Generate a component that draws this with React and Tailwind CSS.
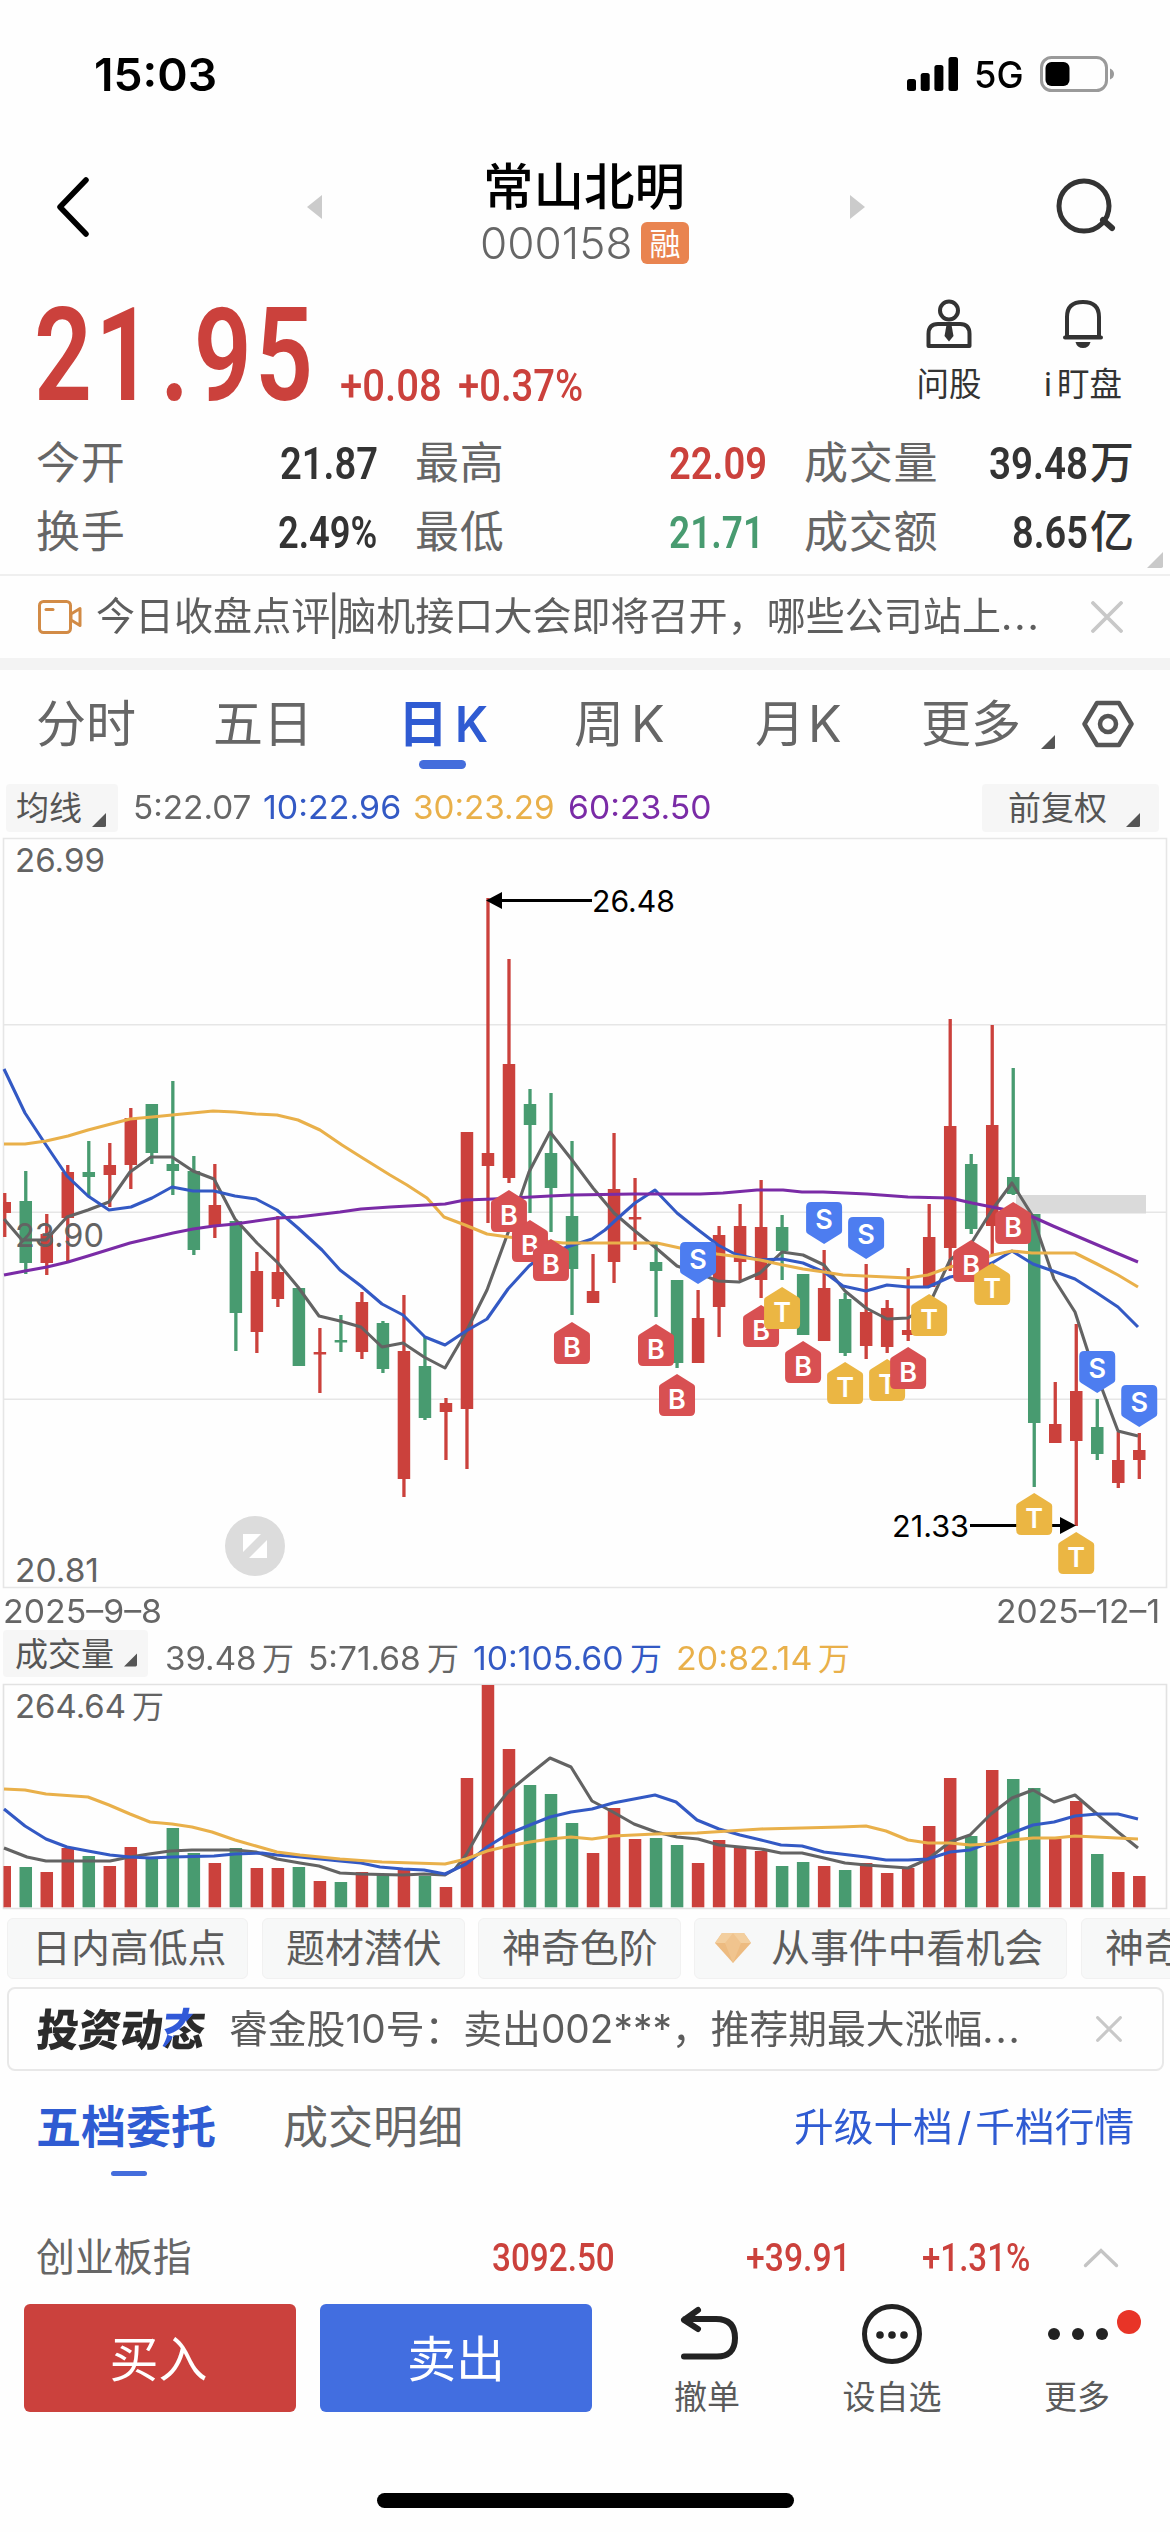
import React, { useLayoutEffect, useRef, useState } from "react";

const RED = "#cb413c";
const GREEN = "#489b70";
const GRAY = "#636363";
const BLUE = "#3359c4";
const GOLD = "#e9b04a";
const PURPLE = "#7a2ba6";

const STEP = 21.01;
const cx = (i) => 4.7 + STEP * i;

// [up, wick top, wick bottom, body top, body bottom, volume top]
const DAYS = [
  [1, 1193, 1237, 1202, 1213, 1866], [0, 1171, 1274, 1201, 1263, 1867], [1, 1214, 1275, 1234, 1263, 1872],
  [1, 1165, 1261, 1172, 1218, 1848], [0, 1141, 1196, 1172, 1177, 1856], [1, 1143, 1207, 1165, 1175, 1866],
  [1, 1108, 1189, 1118, 1165, 1847], [0, 1104, 1164, 1104, 1153, 1857], [0, 1081, 1195, 1164, 1171, 1828],
  [0, 1156, 1255, 1171, 1250, 1853], [1, 1164, 1238, 1205, 1226, 1863], [0, 1221, 1351, 1221, 1313, 1848],
  [1, 1252, 1353, 1271, 1332, 1868], [1, 1216, 1307, 1272, 1299, 1868], [0, 1288, 1366, 1288, 1366, 1867],
  [1, 1328, 1393, 1352, 1354.5, 1881], [0, 1315, 1352, 1340, 1342.5, 1882], [1, 1292, 1359, 1302, 1352, 1872],
  [0, 1321, 1373, 1323, 1369, 1875], [1, 1295, 1497, 1351, 1479, 1870], [0, 1337, 1420, 1366, 1418, 1876],
  [1, 1398, 1460, 1403, 1412, 1887], [1, 1132, 1469, 1132, 1409, 1778], [1, 898, 1223, 1153, 1166, 1685],
  [1, 959, 1183, 1064, 1178, 1749], [0, 1089, 1213, 1104, 1125, 1785], [0, 1093, 1232, 1153, 1188, 1794],
  [0, 1141, 1315, 1216, 1269, 1823], [1, 1254, 1303, 1291, 1303, 1853], [1, 1133, 1283, 1189, 1262, 1808],
  [1, 1178, 1250, 1217, 1219.5, 1839], [0, 1243, 1317, 1262, 1271, 1838], [0, 1280, 1368, 1280, 1363, 1845],
  [1, 1290, 1363, 1318, 1363, 1863], [1, 1226, 1337, 1235, 1307, 1840], [1, 1204, 1280, 1226, 1262, 1847],
  [1, 1180, 1298, 1227, 1280, 1851], [0, 1215, 1280, 1227, 1251, 1866], [0, 1274, 1335, 1274, 1335, 1862],
  [1, 1250, 1341, 1288, 1341, 1866], [0, 1293, 1356, 1299, 1353, 1870], [1, 1264, 1359, 1312, 1346, 1863],
  [1, 1300, 1353, 1308, 1347, 1873], [1, 1268, 1341, 1330, 1335, 1868], [1, 1204, 1287, 1237, 1287, 1826],
  [1, 1019, 1271, 1126, 1248, 1778], [0, 1154, 1234, 1164, 1229, 1836], [1, 1025, 1256, 1125, 1226, 1770],
  [0, 1068, 1195, 1177, 1194, 1779], [0, 1214, 1487, 1214, 1423, 1788], [1, 1382, 1443, 1424, 1443, 1839],
  [1, 1324, 1526, 1391, 1441, 1801], [0, 1399, 1460, 1427, 1454, 1854], [1, 1432, 1488, 1460, 1483, 1872],
  [1, 1433, 1479, 1450, 1460, 1876],
];

const PRICE_LINES = [
  [GRAY, "4,1219 22,1240 46,1240 67,1217 88,1210 109,1202 130,1172 151,1157 172,1157 193,1171 214,1179 235,1219 257,1243 278,1263 298,1287 319,1316 340,1321 361,1327 382,1347 403,1343 424,1357 445,1368 466,1332 487,1290 509,1230 529,1172 550,1132 572,1160 593,1188 614,1213 635,1231 656,1248 677,1266 708,1277 718,1281 739,1282 760,1273 782,1252 803,1255 824,1265 845,1291 866,1308 887,1319 908,1318 929,1305 950,1260 972,1242 992,1210 1012,1183 1032,1215 1054,1279 1075,1312 1088,1352 1096,1373 1118,1431 1138,1436"],
  [BLUE, "4,1069 25,1113 44,1142 67,1176 88,1196 109,1210 131,1207 152,1198 172,1187 193,1191 214,1191 235,1196 256,1199 277,1210 298,1228 322,1250 340,1270 361,1286 382,1304 403,1315 425,1337 445,1345 466,1331 487,1319 508,1289 529,1266 542,1256 570,1246 592,1239 605,1230 618,1218 635,1203 655,1190 677,1213 697,1229 718,1245 735,1254 760,1260 782,1259 803,1263 824,1272 843,1286 866,1291 887,1285 908,1287 928,1287 950,1277 972,1273 992,1263 1012,1251 1033,1264 1053,1271 1075,1279 1097,1293 1118,1307 1138,1327"],
  [GOLD, "4,1144 25,1144 46,1141 68,1136 88,1130 130,1119 152,1117 172,1115 213,1111 235,1112 256,1114 277,1115 298,1120 320,1130 342,1145 361,1157 390,1175 407,1185 427,1198 444,1217 465,1225 487,1234 508,1237 563,1243 657,1243 680,1248 717,1254 740,1257 760,1260 783,1265 803,1269 824,1272 843,1275 887,1277 908,1278 928,1275 950,1267 972,1262 993,1255 1012,1251 1032,1253 1075,1253 1097,1264 1118,1275 1138,1287"],
  [PURPLE, "4,1275 25,1271 47,1267 68,1262 88,1256 130,1243 173,1233 193,1229 214,1226 235,1224 277,1218 298,1217 340,1212 361,1209 390,1207 445,1204 465,1200 493,1199 550,1196 572,1195 633,1194 700,1194 723,1193 757,1190 783,1190 802,1192 823,1192 867,1194 908,1197 950,1198 972,1203 1002,1209 1033,1217 1053,1226 1107,1249 1138,1262"],
];

const VOLUME_LINES = [
  [GRAY, "4,1848 27,1857 46,1861 110,1861 130,1857 149,1854 170,1851 192,1850 236,1850 256,1852 277,1859 300,1863 319,1866 340,1873 361,1874 403,1875 424,1874 445,1875 455,1869 466,1855 487,1818 508,1792 530,1774 550,1758 571,1767 592,1801 613,1812 634,1824 656,1832 677,1837 698,1839 719,1845 740,1847 761,1849 781,1853 802,1853 824,1858 845,1863 866,1865 908,1868 928,1859 950,1842 970,1835 991,1814 1012,1798 1033,1790 1054,1802 1075,1795 1097,1814 1118,1832 1138,1848"],
  [BLUE, "4,1809 25,1826 46,1839 67,1847 88,1851 110,1855 130,1857 150,1858 172,1857 214,1856 235,1854 262,1853 277,1855 300,1857 340,1861 361,1863 380,1867 403,1869 424,1870 445,1874 466,1864 487,1847 508,1834 530,1825 550,1817 571,1812 592,1809 613,1803 634,1799 655,1795 676,1802 697,1820 719,1829 740,1835 761,1840 781,1845 802,1846 824,1852 866,1857 886,1860 908,1860 928,1859 950,1852 970,1850 991,1842 1012,1833 1033,1825 1054,1822 1075,1816 1097,1814 1118,1814 1138,1819"],
  [GOLD, "4,1789 25,1790 46,1794 88,1797 109,1805 130,1814 150,1822 172,1824 192,1827 212,1832 235,1840 256,1846 277,1852 300,1855 340,1859 382,1862 445,1864 466,1859 487,1851 508,1846 530,1842 550,1839 571,1837 592,1839 613,1836 655,1834 697,1833 761,1829 841,1827 866,1826 886,1831 908,1840 928,1843 950,1843 970,1845 991,1844 1012,1840 1033,1838 1055,1838 1075,1836 1138,1839"],
];

// [day index, kind, top y]
const MARKERS = [
  [24, "B", 1190], [25, "B", 1220], [26, "B", 1239], [27, "B", 1322], [31, "B", 1324], [32, "B", 1374],
  [33, "S", 1242], [36, "B", 1305], [37, "T", 1287], [38, "B", 1341], [39, "S", 1202], [40, "T", 1362],
  [41, "S", 1217], [42, "T", 1359], [43, "B", 1347], [44, "T", 1294], [46, "B", 1240], [47, "T", 1263],
  [48, "B", 1202], [49, "T", 1493], [51, "T", 1532], [52, "S", 1351], [54, "S", 1385],
];
const MARKER_FILL = { B: "#d85052", T: "#ebb643", S: "#4d7df0" };

// Stretches its text horizontally to the width given by its class.
function Fit({ className = "", children }) {
  const outer = useRef(null);
  const inner = useRef(null);
  const [scale, setScale] = useState(1);
  useLayoutEffect(() => {
    setScale(outer.current.clientWidth / inner.current.offsetWidth);
  }, []);
  return (
    <span ref={outer} className={"block shrink-0 whitespace-nowrap " + className}>
      <span ref={inner} className="inline-block origin-left align-top" style={{ transform: `scaleX(${scale})` }}>
        {children}
      </span>
    </span>
  );
}

function Corner({ className = "", color = "#555" }) {
  return (
    <svg viewBox="0 0 14 14" className={"shrink-0 " + className}>
      <path d="M14 0V12.5Q14 14 12.5 14H0Z" fill={color} />
    </svg>
  );
}

function Close({ className }) {
  return (
    <svg viewBox="0 0 32 32" className={"shrink-0 " + className}>
      <path d="M2 2L30 30M30 2L2 30" stroke="#c8c8c8" strokeWidth="3.8" strokeLinecap="round" />
    </svg>
  );
}

function ChartText({ x, y, w, size, fill = GRAY, children }) {
  return (
    <text x={x} y={y} fontSize={size} fill={fill} textLength={w} lengthAdjust="spacingAndGlyphs">
      {children}
    </text>
  );
}

function Marker({ index, kind, top }) {
  const x = cx(index) - 18;
  const down = kind === "S";
  const d = down
    ? "M5 0H31Q36 0 36 5V29Q36 31 34 32L18 42L2 32Q0 31 0 29V5Q0 0 5 0Z"
    : "M18 0L34 10Q36 11 36 13V37Q36 42 31 42H5Q0 42 0 37V13Q0 11 2 10Z";
  const y = down ? 27 : 35;
  return (
    <g transform={`translate(${x} ${top})`}>
      <path d={d} fill={MARKER_FILL[kind]} />
      <text x="18" y={y} textAnchor="middle" fontSize="27" fontWeight="600" fill="#fff">
        {kind}
      </text>
    </g>
  );
}

function PriceChart() {
  return (
    <svg viewBox="0 836 1170 754" className="block h-[754px] w-[1170px] shrink-0 font-['Inter','Noto_Sans_CJK_SC',sans-serif]">
      <g stroke="#e6e6e6" strokeWidth="1.6" fill="none">
        <path d="M3.5 838.5H1166.5V1587.5H3.5Z" />
        <path d="M4 1024.8H1166M4 1212.3H1166M4 1399.3H1166" />
      </g>
      <rect x="1016" y="1195" width="130" height="18.5" fill="#dadada" />
      {DAYS.map(([up, wt, wb, bt, bb], i) => (
        <g key={i} fill={up ? RED : GREEN}>
          <rect x={cx(i) - 1.6} y={wt} width="3.3" height={wb - wt} />
          <rect x={Math.max(3.3, cx(i) - 6.2)} y={bt} width={i === 0 ? 7.7 : 12.5} height={bb - bt} />
        </g>
      ))}
      <ChartText x="15" y="872" w="90" size="33">26.99</ChartText>
      <ChartText x="15" y="1247" w="89" size="33">23.90</ChartText>
      <ChartText x="15" y="1582" w="84" size="33">20.81</ChartText>
      {PRICE_LINES.map(([color, points]) => (
        <polyline key={color} points={points} fill="none" stroke={color} strokeWidth="3.1" strokeLinejoin="round" />
      ))}
      <path d="M500 900.5H592M970 1525.5H1062" stroke="#000" strokeWidth="3" />
      <path d="M486 900.5L502 892V909ZM1076 1525.5L1060 1517V1534Z" fill="#000" />
      <ChartText x="592" y="912" w="83" size="30" fill="#000">26.48</ChartText>
      <ChartText x="892" y="1537" w="77" size="30" fill="#000">21.33</ChartText>
      {MARKERS.map(([i, kind, top]) => (
        <Marker key={i} index={i} kind={kind} top={top} />
      ))}
      <circle cx="255" cy="1546" r="30" fill="#dcdcdc" />
      <path d="M243 1534H261L243 1552ZM267 1540V1558H249Z" fill="#fff" />
    </svg>
  );
}

function VolumeChart() {
  return (
    <svg viewBox="0 1682 1170 230" className="block h-[230px] w-[1170px] shrink-0 font-['Inter','Noto_Sans_CJK_SC',sans-serif]">
      <path d="M3.5 1684.5H1166.5V1908.5H3.5Z" stroke="#e2e2e2" strokeWidth="1.6" fill="none" />
      <ChartText x="15" y="1718" w="111" size="32.5">264.64</ChartText>
      <ChartText x="132" y="1718" w="32" size="32">万</ChartText>
      {DAYS.map(([up, , , , , top], i) => (
        <rect
          key={i}
          x={Math.max(3.5, cx(i) - 6.2)}
          y={top}
          width={i === 0 ? 7.5 : 12.5}
          height={1907.3 - top}
          fill={up ? RED : GREEN}
        />
      ))}
      {VOLUME_LINES.map(([color, points]) => (
        <polyline key={color} points={points} fill="none" stroke={color} strokeWidth="3.1" strokeLinejoin="round" />
      ))}
    </svg>
  );
}

function StatusBar() {
  return (
    <div className="flex h-[148px] shrink-0 items-center text-black">
      <Fit className="ml-[94px] w-[123px] pt-[1px] text-[45px] leading-[48px] font-semibold">15:03</Fit>
      <svg viewBox="0 0 52 34" className="ml-[690px] h-[34px] w-[52px] shrink-0">
        <rect x="0" y="22" width="9" height="12" rx="2.5" />
        <rect x="13.7" y="16" width="9" height="18" rx="2.5" />
        <rect x="27.4" y="8" width="9" height="26" rx="2.5" />
        <rect x="41.5" y="0" width="9.5" height="34" rx="2.5" />
      </svg>
      <Fit className="ml-[15px] w-[50px] pt-[2px] text-[37px] leading-[44px] font-medium">5G</Fit>
      <svg viewBox="0 0 76 36" className="ml-[16px] h-[36px] w-[76px] shrink-0">
        <rect x="1.5" y="1.5" width="65" height="33" rx="10" fill="none" stroke="#9a9a9a" strokeWidth="3" />
        <rect x="5.5" y="6" width="24" height="24" rx="6" />
        <path d="M70 12.5Q74 14 74 18T70 23.5Z" fill="#9a9a9a" />
      </svg>
    </div>
  );
}

function Header() {
  return (
    <div className="flex h-[118px] shrink-0 items-center">
      <svg viewBox="0 0 34 60" className="ml-[56px] h-[60px] w-[34px] shrink-0">
        <path d="M30 3L4 30L30 57" fill="none" stroke="#000" strokeWidth="5.5" strokeLinecap="round" strokeLinejoin="round" />
      </svg>
      <svg viewBox="0 0 15 24" className="ml-[217px] h-[24px] w-[15px] shrink-0">
        <path d="M15 0V24L0 12Z" fill="#cbcbcb" />
      </svg>
      <div className="ml-[158px] flex h-[118px] w-[212px] shrink-0 flex-col">
        <div className="mt-[14px] ml-[3px] text-[50.5px] leading-[50px] font-medium whitespace-nowrap text-black">常山北明</div>
        <div className="mt-[10px] flex h-[42px] items-center">
          <Fit className="w-[152px] text-[43px] leading-[42px] font-light text-[#666]">000158</Fit>
          <span className="ml-[9px] flex h-[42px] w-[48px] items-center justify-center rounded-md bg-[#e98450] text-[31px] leading-[31px] text-white">
            融
          </span>
        </div>
      </div>
      <svg viewBox="0 0 15 24" className="ml-[158px] h-[24px] w-[15px] shrink-0">
        <path d="M0 0V24L15 12Z" fill="#cbcbcb" />
      </svg>
      <svg viewBox="0 0 64 60" className="ml-[190px] h-[60px] w-[64px] shrink-0">
        <circle cx="29" cy="29" r="25" fill="none" stroke="#333" strokeWidth="5" />
        <path d="M48 43L57 51" stroke="#333" strokeWidth="6" strokeLinecap="round" />
      </svg>
    </div>
  );
}

function PriceRow() {
  return (
    <div className="flex h-[162px] shrink-0 items-start font-['Roboto','Noto_Sans_CJK_SC',sans-serif] text-[#cb413c]">
      <Fit className="mt-[25px] ml-[34px] w-[282px] text-[130px] leading-[130px] font-semibold tracking-[4px]">
        21<span className="mr-[2px] ml-[5px]">.</span>95
      </Fit>
      <Fit className="mt-[98px] ml-[24px] w-[102px] text-[44px] leading-[44px] font-medium">+0.08</Fit>
      <Fit className="mt-[98px] ml-[16px] w-[125px] text-[44px] leading-[44px] font-medium">+0.37%</Fit>
      <div className="mt-[33px] ml-[331px] flex w-[70px] flex-col items-center text-[#333]">
        <svg viewBox="0 0 46 50" className="h-[50px] w-[46px]">
          <circle cx="23" cy="11.5" r="9" fill="none" stroke="#333" strokeWidth="4" />
          <path d="M2.5 47V35Q2.5 25 12 25H34Q43.500 25 43.500 35V47Z" fill="none" stroke="#333" strokeWidth="4" strokeLinejoin="round" />
          <path d="M20.500 26H25.500L27.500 37L23 42.500L18.500 37Z" fill="#333" />
        </svg>
        <span className="mt-[18px] text-[32.5px] leading-[36px] whitespace-nowrap">问股</span>
      </div>
      <div className="mt-[33px] ml-[56px] flex w-[86px] flex-col items-center text-[#333]">
        <svg viewBox="0 0 40 50" className="h-[50px] w-[40px]">
          <path d="M4 38V18Q4 3 20 3T36 18V38Z" fill="none" stroke="#333" strokeWidth="4" strokeLinejoin="round" />
          <path d="M2 38.500H38" stroke="#333" strokeWidth="4" strokeLinecap="round" />
          <path d="M12.500 43H27.500Q26 49 20 49T12.500 43Z" fill="#333" />
        </svg>
        <span className="mt-[18px] flex gap-[5px] text-[32.5px] leading-[36px] whitespace-nowrap">
          <span>i</span>
          <span>盯盘</span>
        </span>
      </div>
    </div>
  );
}

function Stat({ label, value, unit, labelClass, valueClass }) {
  return (
    <>
      <span className={"shrink-0 pt-[1px] text-[44px] leading-[48px] tracking-[0.8px] whitespace-nowrap text-[#666] " + labelClass}>{label}</span>
      <Fit className={"pt-[2px] font-['Roboto',sans-serif] text-[44px] leading-[48px] font-semibold " + valueClass}>{value}</Fit>
      {unit && <span className="ml-[2px] pt-[1px] text-[44px] leading-[48px] font-medium text-[#333]">{unit}</span>}
    </>
  );
}

function Stats() {
  return (
    <div className="flex h-[148px] shrink-0 items-start border-b-2 border-[#efefef]">
      <div className="w-full">
        <div className="flex h-[69px] items-center">
          <Stat label="今开" value="21.87" labelClass="ml-[36px] w-[244px]" valueClass="w-[98px] text-[#333]" />
          <Stat label="最高" value="22.09" labelClass="ml-[37px] w-[254px]" valueClass="w-[98px] text-[#cb413c]" />
          <Stat label="成交量" value="39.48" unit="万" labelClass="ml-[37px] w-[185px]" valueClass="w-[99px] text-[#333]" />
        </div>
        <div className="flex h-[69px] items-center">
          <Stat label="换手" value="2.49%" labelClass="ml-[36px] w-[242px]" valueClass="w-[99px] text-[#333]" />
          <Stat label="最低" value="21.71" labelClass="ml-[38px] w-[254px]" valueClass="w-[95px] text-[#489b70]" />
          <Stat label="成交额" value="8.65" unit="亿" labelClass="ml-[40px] w-[208px]" valueClass="w-[76px] text-[#333]" />
          <Corner className="mt-[56px] ml-[13px] h-[16px] w-[16px]" color="#c9c9c9" />
        </div>
      </div>
    </div>
  );
}

function NewsRow() {
  return (
    <div className="flex h-[82px] shrink-0 items-center text-[39px] leading-[44px] text-[#5e5e5e]">
      <svg viewBox="0 0 44 34" className="ml-[38px] h-[34px] w-[44px] shrink-0">
        <rect x="1.500" y="1.500" width="31" height="31" rx="4" fill="none" stroke="#d28b46" strokeWidth="3" />
        <path d="M33 14L42 8.500V25.500L33 20Z" fill="none" stroke="#d28b46" strokeWidth="3" strokeLinejoin="round" />
        <path d="M8 9.500H15" stroke="#d28b46" strokeWidth="3" strokeLinecap="round" />
      </svg>
      <Fit className="ml-[14px] w-[945px] pb-[2px]">
        今日收盘点评<span className="mx-[-3px]">|</span>脑机接口大会即将召开，哪些公司站上<span className="tracking-[2px]">...</span>
      </Fit>
      <Close className="ml-[50px] h-[32px] w-[32px]" />
    </div>
  );
}

function PeriodTabs() {
  return (
    <div className="relative flex h-[106px] shrink-0 items-center pt-[1px] text-[50px] leading-[54px] whitespace-nowrap text-[#666]">
      <span className="ml-[36px] w-[177px]">分时</span>
      <span className="w-[185px]">五日</span>
      <span className="flex w-[176px] gap-[7px] font-bold text-[#2f5bd2]">
        <span>日</span>
        <Fit className="w-[33px] font-semibold">K</Fit>
      </span>
      <span className="flex w-[181px] gap-[7px]">
        <span>周</span>
        <Fit className="w-[34px]">K</Fit>
      </span>
      <span className="flex w-[166px] gap-[3px]">
        <span>月</span>
        <Fit className="w-[34px]">K</Fit>
      </span>
      <span className="w-[101px]">更多</span>
      <Corner className="mt-[36px] ml-[19px] h-[14px] w-[14px]" />
      <svg viewBox="0 0 52 48" className="ml-[27px] h-[48px] w-[52px] shrink-0">
        <path d="M15 3H37L49.500 24L37 45H15L2.500 24Z" fill="none" stroke="#555" strokeWidth="4.500" strokeLinejoin="round" />
        <circle cx="26" cy="24" r="8" fill="none" stroke="#555" strokeWidth="4.500" />
      </svg>
      <span className="absolute top-[90px] left-[419px] h-[9px] w-[47px] rounded-full bg-[#446ddc]" />
    </div>
  );
}

function AverageRow() {
  return (
    <div className="flex h-[60px] shrink-0 items-start pt-[8px] text-[33px] leading-[46px] text-[#666]">
      <span className="ml-[6px] flex h-[48px] w-[112px] shrink-0 items-center rounded-sm bg-[#f6f6f6] pl-[10px] text-[#555]">
        <span className="leading-[48px]">均线</span>
        <Corner className="mt-[24px] ml-[10px] h-[14px] w-[14px]" />
      </span>
      <Fit className="ml-[15px] w-[118px]">5:22.07</Fit>
      <Fit className="ml-[12px] w-[138px] text-[#3359c4]">10:22.96</Fit>
      <Fit className="ml-[12px] w-[142px] text-[#e9b04a]">30:23.29</Fit>
      <Fit className="ml-[13px] w-[143px] text-[#7a2ba6]">60:23.50</Fit>
      <span className="ml-[271px] flex h-[48px] w-[177px] shrink-0 items-center rounded-sm bg-[#f6f6f6] pl-[26px] text-[#555]">
        <span className="leading-[48px] whitespace-nowrap">前复权</span>
        <Corner className="mt-[24px] ml-[19px] h-[14px] w-[14px]" />
      </span>
    </div>
  );
}

function VolumeLabel({ className, width, children }) {
  return (
    <span className={"flex shrink-0 gap-[6px] " + className}>
      <Fit className={width}>{children}</Fit>
      <span>万</span>
    </span>
  );
}

function VolumeHeader() {
  return (
    <div className="flex h-[52px] shrink-0 items-start text-[32px] leading-[58px] text-[#666]">
      <span className="ml-[3px] flex h-[47px] w-[145px] shrink-0 items-center rounded-sm bg-[#f6f6f6] pl-[12px] text-[33px] text-[#555]">
        <span className="leading-[46px] whitespace-nowrap">成交量</span>
        <Corner className="mt-[12px] ml-[10px] h-[14px] w-[13px]" />
      </span>
      <VolumeLabel className="ml-[17px]" width="w-[91px]">39.48</VolumeLabel>
      <VolumeLabel className="ml-[14px]" width="w-[113px]">5:71.68</VolumeLabel>
      <VolumeLabel className="ml-[14px] text-[#3359c4]" width="w-[151px]">10:105.60</VolumeLabel>
      <VolumeLabel className="ml-[14px] text-[#e9b04a]" width="w-[136px]">20:82.14</VolumeLabel>
    </div>
  );
}

function Tag({ className, children }) {
  return (
    <span className={"flex h-[61px] shrink-0 items-center rounded-md border border-[#f1f1f1] bg-[#f7f8f8] pb-[1px] whitespace-nowrap " + className}>
      {children}
    </span>
  );
}

function Tags() {
  return (
    <div className="flex h-[75px] shrink-0 items-start overflow-hidden pt-[6px] pl-[7px] text-[38.9px] leading-[44px] text-[#5c5c5c]">
      <Tag className="w-[241px] pl-[24px]">日内高低点</Tag>
      <Tag className="ml-[14px] w-[203px] pl-[23px]">题材潜伏</Tag>
      <Tag className="ml-[13px] w-[203px] pl-[23px]">神奇色阶</Tag>
      <Tag className="ml-[13px] w-[373px] pl-[19px]">
        <svg viewBox="0 0 38 32" className="mr-[19px] h-[32px] w-[38px]">
          <path d="M8 1H30L37 11L19 31L1 11Z" fill="#edbb80" />
          <path d="M8 1H30L37 11H1Z" fill="#f3cf9f" />
          <path d="M11 11L19 1L27 11L19 31Z" fill="#f0c48e" />
        </svg>
        从事件中看机会
      </Tag>
      <Tag className="ml-[14px] w-[203px] pl-[23px]">神奇色阶</Tag>
    </div>
  );
}

function DynamicsCard() {
  return (
    <div className="ml-[7px] flex h-[84px] w-[1157px] shrink-0 items-center rounded-lg border-2 border-[#e8e8e8] text-[#5c5c5c]">
      <Fit className="relative ml-[28px] w-[168px] -skew-x-6 pt-[2px] text-[44px] leading-[50px] font-black text-[#2b2b2b]">
        投资动
        <span className="bg-linear-[128deg,#3159d8_0%,#3159d8_44%,#2b2b2b_45%] bg-clip-text text-transparent">态</span>
      </Fit>
      <Fit className="ml-[24px] w-[793px] text-[39px] leading-[46px]">
        睿金股10号：卖出002***，推荐期最大涨幅<span className="tracking-[2px]">...</span>
      </Fit>
      <Close className="ml-[74px] h-[26px] w-[26px]" />
    </div>
  );
}

function OrderTabs() {
  return (
    <div className="relative flex h-[112px] shrink-0 items-center text-[45px] leading-[50px] whitespace-nowrap">
      <span className="ml-[36px] w-[247px] pt-[1px] font-bold text-[#2f5bd2]">五档委托</span>
      <span className="w-[511px] pt-[1px] text-[#666]">成交明细</span>
      <Fit className="w-[340px] text-[39px] text-[#2f5bd2]">
        升级十档<span className="px-[4px]">/</span>千档行情
      </Fit>
      <span className="absolute top-[100px] left-[111px] h-[5px] w-[36px] rounded-sm bg-[#446ddc]" />
    </div>
  );
}

function IndexRow() {
  return (
    <div className="mt-[36px] flex h-[78px] shrink-0 items-center font-['Roboto','Noto_Sans_CJK_SC',sans-serif] text-[39.5px] leading-[46px] font-medium text-[#cb413c]">
      <span className="ml-[36px] w-[456px] shrink-0 text-[38.9px] font-normal text-[#666]">创业板指</span>
      <Fit className="w-[123px]">3092.50</Fit>
      <Fit className="ml-[131px] w-[105px]">+39.91</Fit>
      <Fit className="ml-[71px] w-[108px]">+1.31%</Fit>
      <svg viewBox="0 0 36 20" className="ml-[53px] h-[20px] w-[36px] shrink-0">
        <path d="M2.500 17.500L18 2.500L33.500 17.500" fill="none" stroke="#c4c4c4" strokeWidth="3.400" strokeLinecap="round" />
      </svg>
    </div>
  );
}

function ActionBar() {
  return (
    <div className="mt-[7px] flex h-[108px] shrink-0 items-start text-[33px] leading-[36px] whitespace-nowrap text-[#5a5a5a]">
      <button className="ml-[24px] h-[108px] w-[272px] shrink-0 rounded-md bg-[#cb413d] pt-[3px] pr-[3px] text-[49px] leading-[54px] text-white">买入</button>
      <button className="ml-[24px] h-[108px] w-[272px] shrink-0 rounded-md bg-[#426ee0] pt-[3px] text-[49px] leading-[54px] text-white">卖出</button>
      <div className="ml-[75px] flex w-[80px] flex-col items-center">
        <svg viewBox="0 0 60 60" className="ml-[6px] h-[60px] w-[60px]">
          <path d="M18 6L4 16L18 25M5 15H36Q55 15 55 34T36 52.500H4" fill="none" stroke="#222" strokeWidth="6" strokeLinecap="round" strokeLinejoin="round" />
        </svg>
        <span className="mt-[15px]">撤单</span>
      </div>
      <div className="ml-[90px] flex w-[110px] flex-col items-center">
        <svg viewBox="0 0 60 60" className="h-[60px] w-[60px]">
          <circle cx="30" cy="30" r="27.500" fill="none" stroke="#222" strokeWidth="5" />
          <circle cx="18" cy="31" r="3.800" fill="#222" />
          <circle cx="30" cy="31" r="3.800" fill="#222" />
          <circle cx="42" cy="31" r="3.800" fill="#222" />
        </svg>
        <span className="mt-[15px]">设自选</span>
      </div>
      <div className="relative ml-[90px] flex w-[80px] flex-col items-center">
        <svg viewBox="0 0 64 60" className="ml-[3px] h-[60px] w-[64px]">
          <circle cx="7" cy="30" r="6" fill="#222" />
          <circle cx="31" cy="30" r="6" fill="#222" />
          <circle cx="55" cy="30" r="6" fill="#222" />
        </svg>
        <span className="mt-[15px]">更多</span>
        <span className="absolute top-[6px] left-[80px] h-[24px] w-[24px] rounded-full bg-[#e83427]" />
      </div>
    </div>
  );
}

export default function App() {
  return (
    <div className="flex h-[2532px] w-[1170px] flex-col overflow-hidden bg-[#fefefe] font-['Inter','Noto_Sans_CJK_SC',sans-serif]">
      <StatusBar />
      <Header />
      <PriceRow />
      <Stats />
      <NewsRow />
      <div className="h-[12px] shrink-0 bg-[#f3f3f3]" />
      <PeriodTabs />
      <AverageRow />
      <PriceChart />
      <div className="flex h-[40px] shrink-0 items-center pt-[2px] text-[33px] leading-[36px] text-[#666]">
        <Fit className="ml-[3px] w-[159px]">2025–9–8</Fit>
        <Fit className="ml-[834px] w-[164px]">2025–12–1</Fit>
      </div>
      <VolumeHeader />
      <VolumeChart />
      <Tags />
      <DynamicsCard />
      <OrderTabs />
      <IndexRow />
      <ActionBar />
      <div className="mt-[81px] ml-[377px] h-[15px] w-[417px] shrink-0 rounded-full bg-black" />
    </div>
  );
}
